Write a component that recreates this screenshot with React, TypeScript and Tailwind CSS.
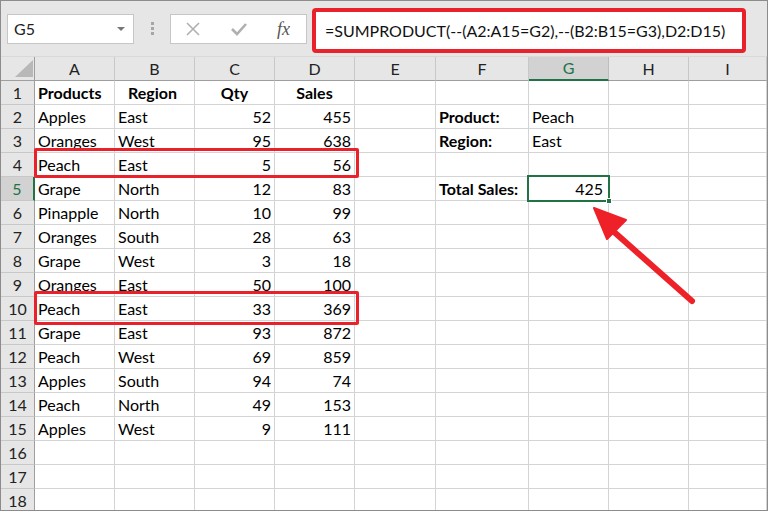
import React from "react";

type Row = [string, string, number, number];

const data: Row[] = [
  ["Apples", "East", 52, 455],
  ["Oranges", "West", 95, 638],
  ["Peach", "East", 5, 56],
  ["Grape", "North", 12, 83],
  ["Pinapple", "North", 10, 99],
  ["Oranges", "South", 28, 63],
  ["Grape", "West", 3, 18],
  ["Oranges", "East", 50, 100],
  ["Peach", "East", 33, 369],
  ["Grape", "East", 93, 872],
  ["Peach", "West", 69, 859],
  ["Apples", "South", 94, 74],
  ["Peach", "North", 49, 153],
  ["Apples", "West", 9, 111],
];

const cols = ["A", "B", "C", "D", "E", "F", "G", "H", "I"];

const cell = "h-[24px] border-r border-b border-[#d4d4d4] flex items-center px-[3px] overflow-hidden whitespace-nowrap";

const Toolbar = () => (
  <div className="flex h-[56px] items-start bg-[#e6e6e6] pl-[6px] border-b border-[#d9d9d9]">
    <div className="mt-[13px] flex h-[30px] w-[127px] items-center justify-between border border-[#c6c6c6] bg-white pl-[6px] pr-[8px] text-[16px] text-[#222]">
      <span>G5</span>
      <span className="h-0 w-0 border-x-[4px] border-t-[4px] border-x-transparent border-t-[#777]" />
    </div>
    <div className="ml-[17px] mt-[21px] flex flex-col gap-[2px]">
      <span className="h-[3px] w-[3px] bg-[#a6a6a6]" />
      <span className="h-[3px] w-[3px] bg-[#a6a6a6]" />
      <span className="h-[3px] w-[3px] bg-[#a6a6a6]" />
    </div>
    <div className="ml-[16px] mt-[13px] flex h-[30px] w-[137px] items-center border border-[#c6c6c6] bg-white">
      <svg width="14" height="14" viewBox="0 0 14 14" className="ml-[15px]">
        <path d="M1 1 L13 13 M13 1 L1 13" stroke="#b0b0b0" strokeWidth="1.6" />
      </svg>
      <svg width="16" height="14" viewBox="0 0 16 14" className="ml-[31px]">
        <path d="M1 7 L6 12 L15 2" stroke="#b0b0b0" strokeWidth="2.6" fill="none" />
      </svg>
      <span className="ml-[30px] text-[18px] italic text-[#555]" style={{ fontFamily: "'Liberation Serif', serif" }}>
        fx
      </span>
    </div>
    <div className="ml-[5px] mt-[7px] flex h-[45px] w-[434px] items-center rounded-[4px] border-[4px] border-[#e8212b] bg-white pl-[9px] text-[16px] text-[#111]">
      =SUMPRODUCT(--(A2:A15=G2),--(B2:B15=G3),D2:D15)
    </div>
  </div>
);

const side: Record<number, [string, string]> = {
  2: ["Product:", "Peach"],
  3: ["Region:", "East"],
  5: ["Total Sales:", "425"],
};

export default function App() {
  return (
    <div
      className="relative h-[511px] w-[768px] overflow-hidden border border-[#8c8c8c] bg-white text-[16px] text-black"
      style={{ fontFamily: "Lato, 'Open Sans', sans-serif" }}
    >
      <Toolbar />
      <div className="grid grid-cols-[34px_80px_80px_80px_80px_81px_93px_80px_80px_1fr]">
        <div className="relative h-[24px] border-r border-b border-[#9e9e9e] bg-[#e6e6e6]">
          <svg width="18" height="17" className="absolute left-[14px] top-[3px]">
            <path d="M18 0 L18 17 L0 17 Z" fill="#b8b8b8" />
          </svg>
        </div>
        {cols.map((c) =>
          c === "G" ? (
            <div key={c} className="flex h-[24px] items-center justify-center border-r border-b-[2px] border-r-[#bdbdbd] border-b-[#217346] bg-[#d2d2d2] text-[#217346]">
              {c}
            </div>
          ) : (
            <div key={c} className="flex h-[24px] items-center justify-center border-r border-b border-r-[#c8c8c8] border-b-[#9e9e9e] bg-[#e6e6e6] text-[#222]">
              {c}
            </div>
          ),
        )}

        {Array.from({ length: 18 }, (_, i) => {
          const r = i + 1;
          const d = r >= 2 && r <= 15 ? data[r - 2] : null;
          const s = side[r];
          return (
            <React.Fragment key={r}>
              <div
                className={
                  r === 5
                    ? "flex h-[24px] items-center justify-center border-r-[2px] border-b border-r-[#217346] border-b-[#c8c8c8] bg-[#d2d2d2] text-[#217346]"
                    : "flex h-[24px] items-center justify-center border-r border-b border-r-[#9e9e9e] border-b-[#c8c8c8] bg-[#e6e6e6] text-[#222]"
                }
              >
                {r}
              </div>
              {r === 1 ? (
                <>
                  <div className={`${cell} font-bold`}>Products</div>
                  <div className={`${cell} font-bold pl-[13px]`}>Region</div>
                  <div className={`${cell} font-bold justify-center`}>Qty</div>
                  <div className={`${cell} font-bold justify-center`}>Sales</div>
                </>
              ) : (
                <>
                  <div className={cell}>{d?.[0]}</div>
                  <div className={cell}>{d?.[1]}</div>
                  <div className={`${cell} justify-end`}>{d?.[2]}</div>
                  <div className={`${cell} justify-end`}>{d?.[3]}</div>
                </>
              )}
              <div className={cell} />
              <div className={`${cell} font-bold`}>{s?.[0]}</div>
              <div className={`${cell} ${r === 5 ? "justify-end pr-[5px]" : ""}`}>{s?.[1]}</div>
              <div className={cell} />
              <div className={cell} />
            </React.Fragment>
          );
        })}
      </div>

      {/* highlight boxes */}
      <div className="absolute left-[33px] top-[147px] h-[30px] w-[325px] rounded-[2px] border-[3px] border-[#e8212b]" />
      <div className="absolute left-[33px] top-[290px] h-[34px] w-[325px] rounded-[2px] border-[3px] border-[#e8212b]" />

      {/* selected cell G5 */}
      <div className="absolute left-[526px] top-[174px] h-[27px] w-[83px] border-[2px] border-[#217346]" />
      <div className="absolute left-[605px] top-[197px] h-[6px] w-[6px] border border-white bg-[#217346]" />

      <svg className="absolute left-0 top-0" width="768" height="511">
        <line x1="691" y1="300" x2="612" y2="230" stroke="#ee2128" strokeWidth="6" strokeLinecap="round" />
        <path d="M593 207 L625 219 L606 238 Z" fill="#ee2128" stroke="#ee2128" strokeWidth="2" strokeLinejoin="round" />
      </svg>
    </div>
  );
}
